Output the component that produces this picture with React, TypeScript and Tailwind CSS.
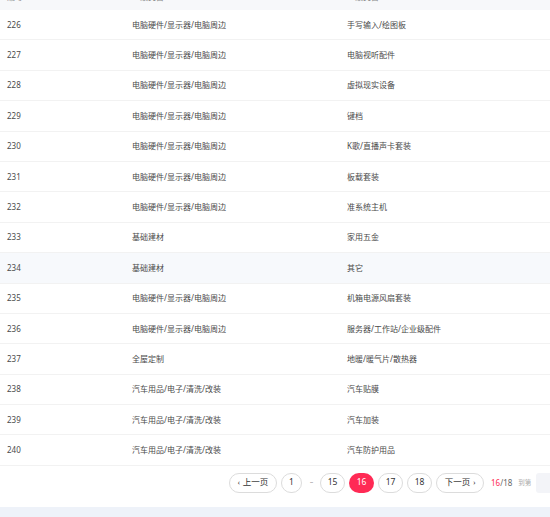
const rows: [string, string, string][] = [
  ["226", "电脑硬件/显示器/电脑周边", "手写输入/绘图板"],
  ["227", "电脑硬件/显示器/电脑周边", "电脑视听配件"],
  ["228", "电脑硬件/显示器/电脑周边", "虚拟现实设备"],
  ["229", "电脑硬件/显示器/电脑周边", "键档"],
  ["230", "电脑硬件/显示器/电脑周边", "K歌/直播声卡套装"],
  ["231", "电脑硬件/显示器/电脑周边", "板载套装"],
  ["232", "电脑硬件/显示器/电脑周边", "准系统主机"],
  ["233", "基础建材", "家用五金"],
  ["234", "基础建材", "其它"],
  ["235", "电脑硬件/显示器/电脑周边", "机箱电源风扇套装"],
  ["236", "电脑硬件/显示器/电脑周边", "服务器/工作站/企业级配件"],
  ["237", "全屋定制", "地暖/暖气片/散热器"],
  ["238", "汽车用品/电子/清洗/改装", "汽车贴膜"],
  ["239", "汽车用品/电子/清洗/改装", "汽车加装"],
  ["240", "汽车用品/电子/清洗/改装", "汽车防护用品"],
];

function PageBtn({ children, active, wide }: { children: React.ReactNode; active?: boolean; wide?: boolean }) {
  return (
    <div
      className={`h-[20px] shrink-0 rounded-full flex items-center justify-center whitespace-nowrap text-[8.5px] ${
        wide ? "w-[48px]" : "w-[25px]"
      } ${active ? "bg-[#ff2a55] text-white" : "border border-[#dcdcdc] text-[#333]"}`}
    >
      {children}
    </div>
  );
}

export default function App() {
  return (
    <div
      className="w-[550px] h-[517px] overflow-hidden bg-white text-[8px] text-[#4a4a4a]"
      style={{ fontFamily: '"Noto Sans", "Noto Sans CJK SC", sans-serif' }}
    >
      {/* header, mostly scrolled out of view */}
      <div className="-mt-[16px] h-[26px] bg-[#f7f8fa] flex items-center text-[#888]">
        <div className="w-[125px] pl-[7px]">编号</div>
        <div className="w-[215px] pl-[7px]">一级类目</div>
        <div className="pl-[7px]">二级类目</div>
      </div>
      {rows.map(([id, a, b]) => (
        <div
          key={id}
          className={`h-[30.4px] flex items-center border-b border-[#f2f2f2] ${id === "234" ? "bg-[#f7f9fc]" : ""}`}
        >
          <div className="w-[125px] pl-[7px]">{id}</div>
          <div className="w-[215px] pl-[7px]">{a}</div>
          <div className="pl-[7px]">{b}</div>
        </div>
      ))}
      <div className="h-[41px] pt-[7px] flex items-start">
        <div className="ml-[229px] flex items-center gap-[4px] whitespace-nowrap">
          <PageBtn wide>
            <span className="mr-[3px] text-[7px]">‹</span>上一页
          </PageBtn>
          <div className="w-[21px] h-[20px] shrink-0 rounded-full border border-[#dcdcdc] flex items-center justify-center text-[8.5px] text-[#333]">
            1
          </div>
          <div className="w-[10px] shrink-0 text-center text-[#aaa] text-[7px] tracking-[-1px]">···</div>
          <PageBtn>15</PageBtn>
          <PageBtn active>16</PageBtn>
          <PageBtn>17</PageBtn>
          <PageBtn>18</PageBtn>
          <PageBtn wide>
            下一页<span className="ml-[3px] text-[7px]">›</span>
          </PageBtn>
          <div className="ml-[3px] shrink-0 text-[8px]">
            <span className="text-[#ff2a55]">16</span>
            <span className="text-[#666]">/18</span>
          </div>
          <div className="ml-[2px] shrink-0 text-[6.5px] text-[#aaa]">到第</div>
          <div className="ml-[1px] shrink-0 w-[30px] h-[20px] rounded-[3px] bg-[#f3f4f8]" />
        </div>
      </div>
      <div className="h-[20px] bg-[#eef2f9]" />
    </div>
  );
}
